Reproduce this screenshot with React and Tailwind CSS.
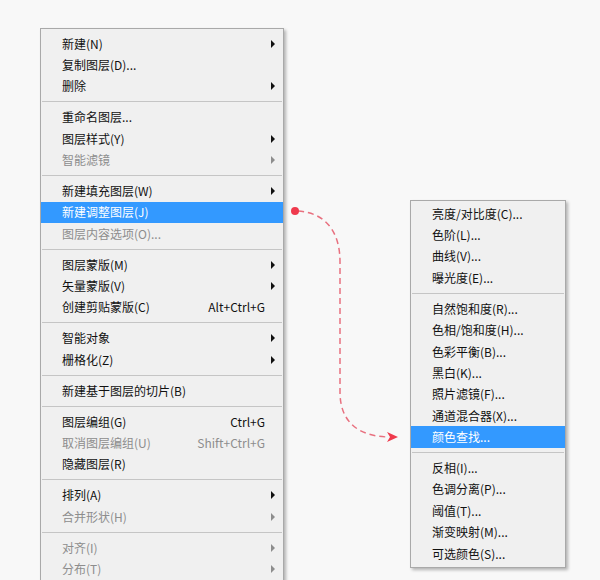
import React from "react";

const mainItems = [
  { t: "新建(N)", sub: true },
  { t: "复制图层(D)..." },
  { t: "删除", sub: true },
  "sep",
  { t: "重命名图层..." },
  { t: "图层样式(Y)", sub: true },
  { t: "智能滤镜", sub: true, dis: true },
  "sep",
  { t: "新建填充图层(W)", sub: true },
  { t: "新建调整图层(J)", active: true },
  { t: "图层内容选项(O)...", dis: true },
  "sep",
  { t: "图层蒙版(M)", sub: true },
  { t: "矢量蒙版(V)", sub: true },
  { t: "创建剪贴蒙版(C)", key: "Alt+Ctrl+G" },
  "sep",
  { t: "智能对象", sub: true },
  { t: "栅格化(Z)", sub: true },
  "sep",
  { t: "新建基于图层的切片(B)" },
  "sep",
  { t: "图层编组(G)", key: "Ctrl+G" },
  { t: "取消图层编组(U)", key: "Shift+Ctrl+G", dis: true },
  { t: "隐藏图层(R)" },
  "sep",
  { t: "排列(A)", sub: true },
  { t: "合并形状(H)", sub: true, dis: true },
  "sep",
  { t: "对齐(I)", sub: true, dis: true },
  { t: "分布(T)", sub: true, dis: true },
  { t: "", dis: true },
];

const subItems = [
  { t: "亮度/对比度(C)..." },
  { t: "色阶(L)..." },
  { t: "曲线(V)..." },
  { t: "曝光度(E)..." },
  "sep",
  { t: "自然饱和度(R)..." },
  { t: "色相/饱和度(H)..." },
  { t: "色彩平衡(B)..." },
  { t: "黑白(K)..." },
  { t: "照片滤镜(F)..." },
  { t: "通道混合器(X)..." },
  { t: "颜色查找...", active: true },
  "sep",
  { t: "反相(I)..." },
  { t: "色调分离(P)..." },
  { t: "阈值(T)..." },
  { t: "渐变映射(M)..." },
  { t: "可选颜色(S)..." },
];

const MenuList = ({ items }) => (
  <>
    {items.map((it, i) => {
      if (it === "sep") {
        return (
          <div key={i} className="h-[9.5px] flex items-center px-[1px]">
            <div className="h-px w-full bg-[#c5c5c5]" />
          </div>
        );
      }
      const color = it.active
        ? "text-white"
        : it.dis
        ? "text-[#8d8d8d]"
        : "text-[#111]";
      return (
        <div
          key={i}
          className={`h-[21.4px] flex items-center pl-[21px] pr-[8px] ${color} ${
            it.active ? "bg-[#3399ff]" : ""
          }`}
        >
          <span className="flex-1 whitespace-nowrap">{it.t}</span>
          {it.key && <span className="mr-[10px] whitespace-nowrap">{it.key}</span>}
          {it.sub && (
            <span
              className={`w-0 h-0 border-y-[4px] border-y-transparent border-l-[4px] ${
                it.dis ? "border-l-[#8d8d8d]" : "border-l-[#111]"
              }`}
            />
          )}
        </div>
      );
    })}
  </>
);

export default function App() {
  return (
    <div
      className="relative w-[600px] h-[580px] overflow-hidden bg-[#f8f8f8] text-[12px]"
      style={{ fontFamily: '"Noto Sans CJK SC", "Noto Sans", sans-serif' }}
    >
      <div className="flex items-start pt-[28px] pl-[40px]">
        {/* Main menu */}
        <div className="w-[244px] bg-[#f0f0f0] border border-[#a9a9a9] pt-[4px] pb-[3px] shadow-[2px_2px_3px_rgba(0,0,0,0.28)]">
          <MenuList items={mainItems} />
        </div>

        {/* Submenu */}
        <div className="ml-[126px] mt-[172px] w-[156px] bg-[#f0f0f0] border border-[#a9a9a9] pt-[2px] pb-[3px] shadow-[2px_2px_3px_rgba(0,0,0,0.28)]">
          <MenuList items={subItems} />
        </div>
      </div>

      {/* Connector */}
      <svg className="absolute left-0 top-0" width="600" height="580">
        <path
          d="M298 211 C326 213 340 232 340 262 L340 392 C340 420 356 436 388 437"
          fill="none"
          stroke="#e8707f"
          strokeWidth="1.5"
          strokeDasharray="6 4"
        />
        <polygon points="387,432 398,437 387,442 390,437" fill="#ef3a4d" />
        <circle cx="295" cy="211" r="4" fill="#ef3a4d" />
      </svg>
    </div>
  );
}
